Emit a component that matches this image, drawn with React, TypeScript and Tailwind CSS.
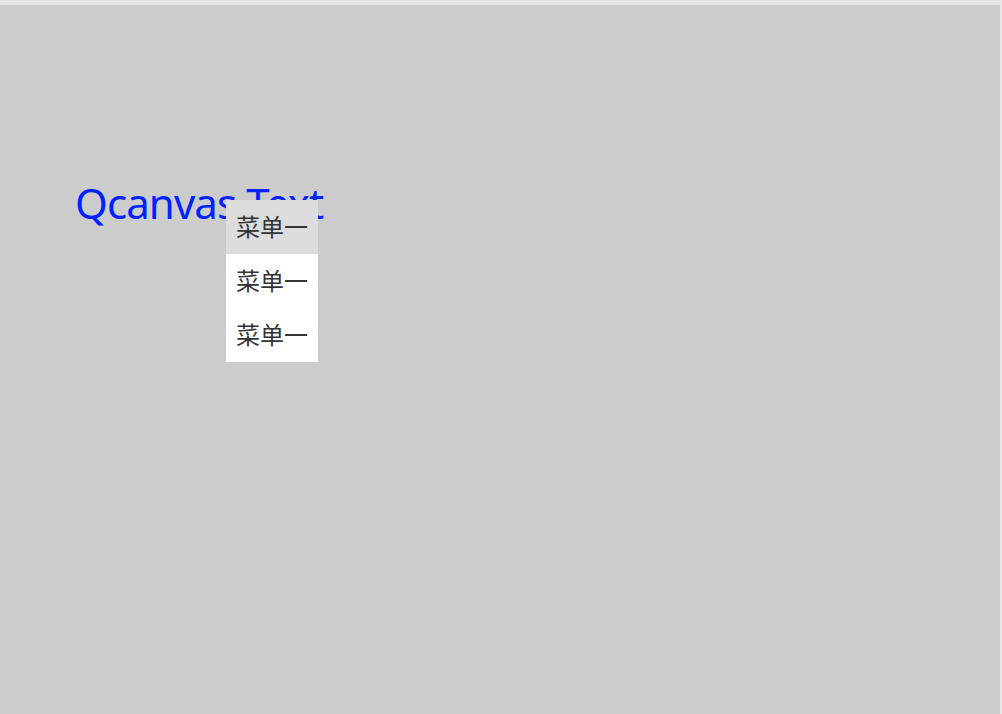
import React from 'react';

const items = ['菜单一', '菜单一', '菜单一'];

export default function App() {
  return (
    <div className="w-[1002px] h-[714px] bg-[#e6e6e6] pt-[5px] overflow-hidden">
      <div
        className="relative w-[1000px] h-[709px] bg-[#cccccc]"
        style={{ fontFamily: '"Noto Sans", "Noto Sans CJK SC", sans-serif' }}
      >
        {/* canvas text */}
        <div className="absolute left-[75px] top-[168px] text-[42px] leading-[60px] tracking-[-0.9px] text-[#0022ff] whitespace-nowrap">
          Qcanvas Text
        </div>

        {/* context menu */}
        <div className="absolute left-[226px] top-[195px] w-[92px] bg-white">
          {items.map((label, i) => (
            <div
              key={i}
              className={`h-[54px] flex items-center px-[10px] text-[24px] text-[#333333] ${
                i === 0 ? 'bg-[#dddddd]' : 'bg-white'
              }`}
            >
              {label}
            </div>
          ))}
        </div>
      </div>
    </div>
  );
}
